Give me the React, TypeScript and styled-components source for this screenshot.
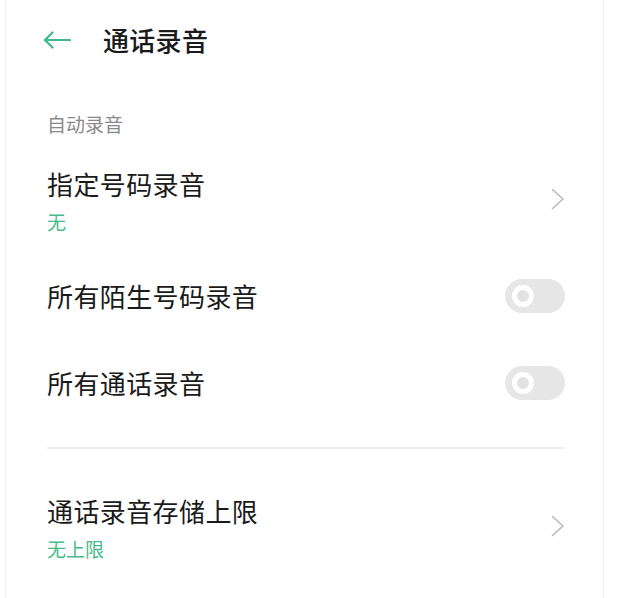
import React from "react";
import styled, { createGlobalStyle } from "styled-components";

const Global = createGlobalStyle`
  html, body { margin: 0; padding: 0; background: #ffffff; }
  body { font-family: "Noto Sans CJK SC", "Noto Sans", sans-serif; }
`;

const Card = styled.div`
  margin-left: 5px;
  width: 597px;
  min-height: 598px;
  border-left: 1px solid #f1f1f1;
  border-right: 1px solid #f1f1f1;
  box-sizing: content-box;
  display: flex;
  flex-direction: column;
`;

const Header = styled.div`
  height: 80px;
  display: flex;
  align-items: center;
  padding-left: 37px;
  gap: 32px;
`;

const BackBtn = styled.div`
  display: flex;
  align-items: center;
  width: 28px;
  height: 18px;
`;

const Title = styled.h1`
  margin: 0;
  font-size: 26px;
  font-weight: 500;
  color: #1a1a1a;
  line-height: 34px;
  letter-spacing: 0.3px;
`;

const SectionLabel = styled.div`
  padding: 31px 0 0 41px;
  height: 39px;
  font-size: 19px;
  line-height: 26px;
  color: #8a8a8a;
`;

const Row = styled.div<{ $h: number }>`
  height: ${(p) => p.$h}px;
  display: flex;
  align-items: center;
  justify-content: space-between;
  padding: 0 38px 0 41px;
`;

const Texts = styled.div`
  display: flex;
  flex-direction: column;
  gap: 8px;
`;

const Label = styled.div`
  font-size: 26px;
  line-height: 34px;
  color: #1a1a1a;
  letter-spacing: 0.4px;
`;

const Sub = styled.div`
  font-size: 19px;
  line-height: 26px;
  color: #45bb8c;
`;

const Divider = styled.div`
  height: 2px;
  background: #eeeeee;
  margin: 21px 38px 0 41px;
`;

const Track = styled.div`
  width: 60px;
  height: 34px;
  border-radius: 17px;
  background: #e6e6e6;
  display: flex;
  align-items: center;
  padding-left: 7px;
  box-sizing: border-box;
`;

const Knob = styled.div`
  width: 22px;
  height: 22px;
  border-radius: 50%;
  border: 5px solid #ffffff;
  background: #e2e2e2;
  box-sizing: border-box;
`;

const ChevronBox = styled.div`
  display: flex;
  margin-bottom: 5px;
`;

const Chevron = () => (
  <ChevronBox>
    <svg width="14" height="22" viewBox="0 0 14 22">
      <polyline points="1.5,1.5 12,11 1.5,20.5" fill="none" stroke="#b8b8b8" strokeWidth="1.6" strokeLinecap="round" strokeLinejoin="round" />
    </svg>
  </ChevronBox>
);

const BackArrow = () => (
  <svg width="28" height="18" viewBox="0 0 28 18">
    <g fill="none" stroke="#3fba8c" strokeWidth="2.2" strokeLinecap="round" strokeLinejoin="round">
      <line x1="2" y1="9" x2="27" y2="9" />
      <polyline points="9.5,1.5 2,9 9.5,16.5" />
    </g>
  </svg>
);

const Switch = () => (
  <Track>
    <Knob />
  </Track>
);

export default function App() {
  return (
    <>
      <Global />
      <Card>
        <Header>
          <BackBtn>
            <BackArrow />
          </BackBtn>
          <Title>通话录音</Title>
        </Header>
        <SectionLabel>自动录音</SectionLabel>
        <Row $h={102}>
          <Texts>
            <Label>指定号码录音</Label>
            <Sub>无</Sub>
          </Texts>
          <Chevron />
        </Row>
        <Row $h={87}>
          <Label>所有陌生号码录音</Label>
          <Switch />
        </Row>
        <Row $h={87}>
          <Label>所有通话录音</Label>
          <Switch />
        </Row>
        <Divider />
        <Row $h={158}>
          <Texts>
            <Label>通话录音存储上限</Label>
            <Sub>无上限</Sub>
          </Texts>
          <Chevron />
        </Row>
      </Card>
    </>
  );
}
